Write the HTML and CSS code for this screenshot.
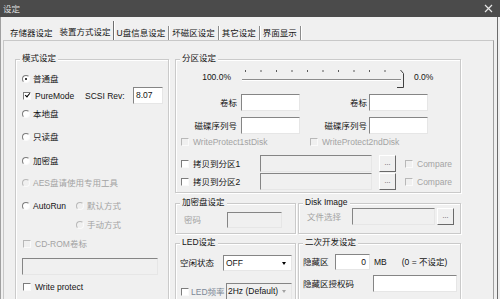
FILE: index.html
```html
<!DOCTYPE html>
<html lang="zh-CN">
<head>
    <meta charset="UTF-8">
    <meta name="viewport" content="width=device-width, initial-scale=1.0">
    <title>设定</title>
    <link rel="stylesheet" href="styles.css">
</head>
<body>
    <!-- Title bar -->
    <div class="titlebar">
        <span>设定</span>
        <svg class="close" width="9" height="9" viewBox="0 0 9 9"><path d="M1 1 L8 8 M8 1 L1 8" stroke="#e6e6e6" stroke-width="1.2" fill="none"/></svg>
    </div>

    <div class="client">
        <!-- Tabs -->
        <div class="tabs">
            <span class="tab">存储器设定</span>
            <span class="tab active">装置方式设定</span>
            <span class="tab">U盘信息设定</span>
            <span class="tab">坏磁区设定</span>
            <span class="tab">其它设定</span>
            <span class="tab">界面显示</span>
        </div>

        <div class="panel">
            <!-- 模式设定 -->
            <div class="group mode">
                <span class="caption">模式设定</span>
                <div class="opt"><i class="radio on"></i>普通盘</div>
                <div class="opt"><i class="check on"></i><span class="pure">PureMode</span><span class="scsi">SCSI Rev:</span><span class="field rev">8.07</span></div>
                <div class="opt"><i class="radio"></i>本地盘</div>
                <div class="opt"><i class="radio"></i>只读盘</div>
                <div class="opt"><i class="radio"></i>加密盘</div>
                <div class="opt dis"><i class="radio"></i>AES盘请使用专用工具</div>
                <div class="opt"><i class="radio"></i><span class="autorun">AutoRun</span><span class="sub dis"><i class="radio"></i>默认方式</span></div>
                <div class="opt indent dis"><i class="radio"></i>手动方式</div>
                <div class="opt dis"><i class="check"></i>CD-ROM卷标</div>
                <div class="opt"><span class="field off label-box"></span></div>
                <div class="opt"><i class="check"></i>Write protect</div>
            </div>

            <div class="side">
                <!-- 分区设定 -->
                <div class="group part">
                    <span class="caption">分区设定</span>
                    <div class="row slide">
                        <span class="pct">100.0%</span>
                        <svg class="slider" width="168" height="22" viewBox="0 0 168 22">
                            <line x1="2" y1="13.5" x2="161" y2="13.5" stroke="#8c8c8c"/>
                            <line x1="2" y1="14.5" x2="161" y2="14.5" stroke="#fff"/>
                            <g stroke="#5a5a5a">
                                <line x1="5.5" y1="4" x2="5.5" y2="6"/>
                                <line x1="21" y1="4" x2="21" y2="6"/>
                                <line x1="36.5" y1="4" x2="36.5" y2="6"/>
                                <line x1="52" y1="4" x2="52" y2="6"/>
                                <line x1="67.5" y1="4" x2="67.5" y2="6"/>
                                <line x1="83" y1="4" x2="83" y2="6"/>
                                <line x1="98.5" y1="4" x2="98.5" y2="6"/>
                                <line x1="114" y1="4" x2="114" y2="6"/>
                                <line x1="129.5" y1="4" x2="129.5" y2="6"/>
                                <line x1="145" y1="4" x2="145" y2="6"/>
                            </g>
                            <path d="M160.5 4 L163.5 7.5 V21.5 H157" fill="none" stroke="#404040"/>
                        </svg>
                        <span class="pct-end">0.0%</span>
                    </div>
                    <div class="row vol">
                        <span class="lbl">卷标</span><span class="field box"></span>
                        <span class="lbl lbl2">卷标</span><span class="field box"></span>
                    </div>
                    <div class="row serial">
                        <span class="lbl">磁碟序列号</span><span class="field box"></span>
                        <span class="lbl lbl2">磁碟序列号</span><span class="field box"></span>
                    </div>
                    <div class="row wp dis">
                        <span class="c1"><i class="check"></i>WriteProtect1stDisk</span>
                        <span class="c2"><i class="check"></i>WriteProtect2ndDisk</span>
                    </div>
                    <div class="row copy">
                        <span class="c1"><i class="check"></i>拷贝到分区1</span>
                        <span class="field off path"></span>
                        <span class="btn">...</span>
                        <span class="cmp dis"><i class="check"></i>Compare</span>
                    </div>
                    <div class="row copy">
                        <span class="c1"><i class="check"></i>拷贝到分区2</span>
                        <span class="field off path"></span>
                        <span class="btn">...</span>
                        <span class="cmp dis"><i class="check"></i>Compare</span>
                    </div>
                </div>

                <div class="pair">
                    <!-- 加密盘设定 -->
                    <div class="group crypt">
                        <span class="caption">加密盘设定</span>
                        <div class="row">
                            <span class="lbl dis">密码</span>
                            <span class="field off short pwd"></span>
                        </div>
                    </div>
                    <!-- Disk Image -->
                    <div class="group image">
                        <span class="caption">Disk Image</span>
                        <div class="row">
                            <span class="lbl dis">文件选择</span>
                            <span class="field off file"></span>
                            <span class="btn">...</span>
                        </div>
                    </div>
                </div>

                <div class="pair low">
                    <!-- LED设定 -->
                    <div class="group led">
                        <span class="caption">LED设定</span>
                        <div class="row idle">
                            <span class="lbl">空闲状态</span>
                            <span class="field short select">OFF</span>
                        </div>
                        <div class="row freq">
                            <span class="ck fade"><i class="check"></i>LED频率</span>
                            <span class="field off select dis">2Hz (Default)</span>
                        </div>
                    </div>
                    <!-- 二次开发设定 -->
                    <div class="group dev">
                        <span class="caption">二次开发设定</span>
                        <div class="row hide">
                            <span class="lbl">隐藏区</span>
                            <span class="field short size">0</span>
                            <span class="unit">MB</span>
                            <span class="note">(0 = 不设定)</span>
                        </div>
                        <div class="row auth">
                            <span class="lbl">隐藏区授权码</span>
                            <span class="field code"></span>
                        </div>
                    </div>
                </div>
            </div>
        </div>
    </div>
</body>
</html>
```

FILE: styles.css
```css
/* General page */
body {
    margin: 0;
    width: 500px;
    height: 299px;
    overflow: hidden;
    background: #f0f0f0;
    font-family: "Liberation Sans", "Noto Sans CJK SC", sans-serif;
    font-size: 8.5px;
    line-height: 12px;
    color: #141414;
}

.dis,
.dis .field {
    color: #a3a3a3;
}

/* Title bar */
.titlebar {
    display: flex;
    justify-content: space-between;
    align-items: center;
    height: 17px;
    padding: 0 7px 0 3px;
    background: #4b4b4b;
    color: #dedede;
}

.client {
    width: 498px;
    height: 282px;
    box-sizing: border-box;
    border-left: 1px solid #a0a0a0;
    border-right: 1px solid #6b6b6b;
}

/* Tabs */
.tabs {
    display: flex;
    align-items: flex-end;
    height: 23px;
    padding-left: 6px;
}
.tab {
    height: 14px;
    line-height: 14px;
    padding: 0 3px;
    border-right: 1px solid #8c8c8c;
    box-shadow: 1px 0 0 #fff;
}
.tab:first-child {
    border-right: 0;
    box-shadow: none;
    padding-right: 3px;
}
.tab.active {
    height: 16px;
    line-height: 16px;
    padding: 3px 2px 0 4px;
    border-right-color: #6e6e6e;
}

/* Tab page */
.panel {
    display: flex;
    align-items: flex-start;
    gap: 6px;
    width: 491px;
    height: 259px;
    margin-left: 2px;
    padding: 18px 0 0 11px;
    box-sizing: border-box;
    border-top: 1px solid #c8c8c8;
    border-left: 1px solid #c8c8c8;
    border-right: 1px solid #a0a0a0;
}

/* Group boxes */
.group {
    position: relative;
    box-sizing: border-box;
    border: 1px solid #cacaca;
    box-shadow: inset 1px 1px 0 #fff, 1px 1px 0 #fff;
}
.caption {
    position: absolute;
    top: -8px;
    left: 4px;
    padding: 0 2px;
    background: #f0f0f0;
    color: #141414;
}

.row,
.opt,
.sub,
.c1,
.c2,
.cmp,
.ck {
    display: flex;
    align-items: center;
}

/* Radio buttons and check boxes */
.radio,
.check {
    position: relative;
    flex: none;
    width: 8px;
    height: 8px;
    box-sizing: border-box;
    border: 1px solid;
    border-color: #7c7c7c #fafafa #fafafa #7c7c7c;
    background: #fff;
}
.radio {
    border-radius: 50%;
    margin-right: 3px;
}
.check {
    margin: 0 4px 0 1px;
}
.radio.on::after {
    content: "";
    position: absolute;
    left: 2px;
    top: 2px;
    width: 2px;
    height: 2px;
    border-radius: 50%;
    background: #000;
}
.check.on::after {
    content: "";
    position: absolute;
    left: 1.5px;
    top: -0.5px;
    width: 2px;
    height: 4px;
    border: solid #000;
    border-width: 0 1.3px 1.3px 0;
    transform: rotate(40deg);
}
.dis .radio,
.dis .check {
    border-color: #b8b8b8 #fafafa #fafafa #b8b8b8;
    background: #f0f0f0;
}

/* Inputs */
.field {
    display: block;
    height: 17px;
    box-sizing: border-box;
    padding: 0 2px;
    border: 1px solid;
    border-color: #858585 #e6e6e6 #e6e6e6 #858585;
    background: #fff;
    line-height: 15px;
    color: #141414;
}
.field.short {
    height: 16px;
    line-height: 14px;
}
.field.off {
    background: #f0f0f0;
}
.btn {
    width: 17px;
    height: 17px;
    box-sizing: border-box;
    border: 1px solid;
    border-color: #fff #6a6a6a #6a6a6a #fff;
    font-size: 7px;
    line-height: 14px;
    text-align: center;
    color: #444;
}
.select {
    display: flex;
    justify-content: space-between;
    align-items: center;
}
.select::after {
    content: "";
    border-left: 2.5px solid transparent;
    border-right: 2.5px solid transparent;
    border-top: 3px solid #000;
    margin-right: 3px;
}
.select.dis::after {
    border-top-color: #a3a3a3;
}

/* 模式设定 */
.mode {
    display: grid;
    grid-template-rows: 16px 17px 20px 26px 22px 22px 24px 14px 24px 21px 20px;
    align-content: start;
    width: 154px;
    height: 245px;
    padding: 11px 0 0 6px;
}
.pure {
    width: 50px;
}
.scsi {
    width: 48px;
}
.rev {
    width: 30px;
}
.autorun {
    width: 43px;
}
.indent {
    padding-left: 54px;
}
.label-box {
    width: 136px;
}

/* Right column */
.side {
    display: flex;
    flex-direction: column;
    width: 286px;
}

/* 分区设定 */
.part {
    display: flex;
    flex-direction: column;
    height: 134px;
}
.part .slide {
    margin-top: 6px;
    height: 22px;
}
.pct {
    width: 55px;
    text-align: right;
}
.slider {
    margin-left: 9px;
}
.pct-end {
    margin-left: 6px;
}
.part .vol,
.part .serial {
    margin-top: 6px;
    height: 17px;
}
.part .lbl {
    width: 65px;
    box-sizing: border-box;
    padding-right: 4px;
    text-align: right;
}
.part .lbl2 {
    width: 69px;
    padding-right: 2px;
}
.part .box {
    width: 59px;
}
.part .wp {
    margin-top: 2px;
    height: 12px;
    padding-left: 4px;
}
.wp .c1 {
    width: 129px;
}
.part .copy {
    margin-top: 7px;
    height: 17px;
    padding-left: 4px;
}
.part .copy + .copy {
    margin-top: 1px;
}
.copy .c1 {
    width: 80px;
}
.path {
    width: 112px;
}
.copy .btn {
    margin-left: 7px;
}
.cmp {
    margin-left: 8px;
}

/* Bottom group rows */
.pair {
    display: flex;
    gap: 2px;
    height: 31px;
    margin-top: 10px;
}
.pair.low {
    height: 70px;
    margin-top: 9px;
}
.crypt,
.led {
    width: 121px;
}
.image,
.dev {
    width: 163px;
}
.crypt .row {
    margin-top: 8px;
    padding-left: 8px;
}
.crypt .lbl {
    width: 43px;
}
.pwd {
    width: 55px;
}
.image .row {
    margin-top: 4px;
    padding-left: 8px;
}
.image .lbl {
    width: 45px;
}
.file {
    width: 83px;
}
.image .btn {
    margin-left: 2px;
}

/* LED设定 */
.led .row {
    padding-left: 4px;
}
.led .idle {
    margin-top: 11px;
}
.led .lbl {
    width: 43px;
}
.idle .select {
    width: 69px;
}
.led .freq {
    margin-top: 12px;
}
.ck {
    width: 46px;
}
.ck .check {
    margin-right: 2px;
}
.fade {
    color: #7d8896;
}
.freq .select {
    width: 66px;
    padding-left: 1px;
}

/* 二次开发设定 */
.dev .row {
    padding-left: 4px;
}
.dev .hide {
    margin-top: 10px;
}
.hide .lbl {
    width: 32px;
}
.size {
    width: 35px;
    padding-right: 3px;
    text-align: right;
}
.unit {
    margin-left: 4px;
}
.note {
    margin-left: 15px;
}
.dev .auth {
    margin-top: 5px;
}
.auth .lbl {
    width: 70px;
}
.code {
    width: 84px;
}
```
